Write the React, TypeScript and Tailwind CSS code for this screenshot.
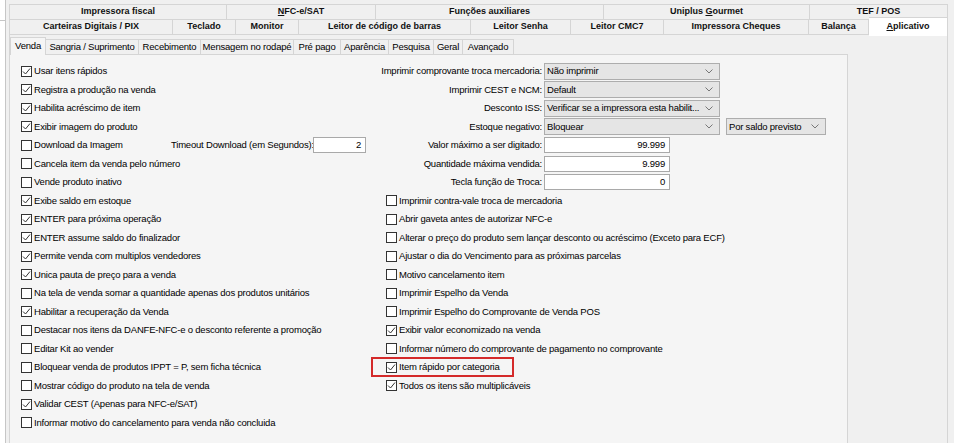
import React from "react";

const FONT = "font-['Liberation_Sans',Arial,sans-serif]";

function Check({ on }: { on?: boolean }) {
  return (
    <span className="flex h-[11px] w-[11px] shrink-0 items-center justify-center border border-[#333] bg-white">
      {on && (
        <svg width="9" height="9" viewBox="0 0 9 9">
          <polyline points="1,4.5 3.5,7 8,1.5" fill="none" stroke="#333" strokeWidth="1" />
        </svg>
      )}
    </span>
  );
}

function Opt({ on, label }: { on?: boolean; label: string }) {
  return (
    <div className="flex h-[18.5px] items-center gap-[2px]">
      <Check on={on} />
      <span className="whitespace-nowrap">{label}</span>
    </div>
  );
}

function Chevron() {
  return (
    <svg width="8" height="5" viewBox="0 0 8 5" className="shrink-0">
      <polyline points="0.5,0.5 4,4 7.5,0.5" fill="none" stroke="#777" strokeWidth="1" />
    </svg>
  );
}

function Combo({ value, w }: { value: string; w: string }) {
  return (
    <div className={`flex h-[17px] items-center justify-between gap-[4px] border border-[#adadad] bg-[#e5e5e5] pl-[2px] pr-[6px] ${w}`}>
      <span className="whitespace-nowrap">{value}</span>
      <Chevron />
    </div>
  );
}

function Input({ value, w }: { value: string; w: string }) {
  return (
    <div className={`flex h-[16px] items-center justify-end border border-[#a9a9a9] bg-white pr-[4px] ${w}`}>
      {value}
    </div>
  );
}

function LabeledRow({ label, children }: { label: string; children: React.ReactNode }) {
  return (
    <div className="flex h-[18.5px] items-center">
      <span className="flex w-[158px] justify-end whitespace-nowrap pr-[2px]">{label}</span>
      {children}
    </div>
  );
}

const row1 = [
  { t: "Impressora fiscal", w: "w-[217px]" },
  { t: "NFC-e/SAT", w: "w-[149px]", u: 0 },
  { t: "Funções auxiliares", w: "w-[228px]" },
  { t: "Uniplus Gourmet", w: "w-[206px]", u: 8 },
  { t: "TEF / POS", w: "flex-1" },
];

const row2 = [
  { t: "Carteiras Digitais / PIX", w: "w-[163px]" },
  { t: "Teclado", w: "w-[63px]" },
  { t: "Monitor", w: "w-[63px]" },
  { t: "Leitor de código de barras", w: "w-[172px]" },
  { t: "Leitor Senha", w: "w-[100px]" },
  { t: "Leitor CMC7", w: "w-[93px]" },
  { t: "Impressora Cheques", w: "w-[145px]" },
  { t: "Balança", w: "w-[60px]" },
];

const subTabs = [
  { t: "Sangria / Suprimento", w: "w-[93px]" },
  { t: "Recebimento", w: "w-[62px]" },
  { t: "Mensagem no rodapé", w: "w-[93px]" },
  { t: "Pré pago", w: "w-[47px]" },
  { t: "Aparência", w: "w-[48px]" },
  { t: "Pesquisa", w: "w-[45px]" },
  { t: "Geral", w: "w-[29px]" },
  { t: "Avançado", w: "w-[51px]" },
];

function Label({ t, u }: { t: string; u?: number }) {
  if (u === undefined) return <span className="whitespace-pre">{t}</span>;
  return (
    <span className="whitespace-pre">
      {t.slice(0, u)}
      <span className="underline">{t[u]}</span>
      {t.slice(u + 1)}
    </span>
  );
}

export default function App() {
  return (
    <div className={`flex h-[443px] w-[954px] overflow-hidden bg-[#f0f0f0] text-[9.5px] tracking-[-0.2px] text-black ${FONT}`}>
      {/* edge of neighbouring panel */}
      <div className="flex w-[6px] flex-col">
        <div className="h-[21px] border-b border-r border-[#c6c6c6] bg-white" />
        <div className="flex-1 border-r border-[#c6c6c6] bg-white" />
      </div>

      <div className="ml-[3px] mt-[4px] flex w-[939px] flex-col">
        {/* outer tab headers */}
        <div className="flex h-[15px] border-l border-t border-[#d5d5d5] text-[9px] font-bold tracking-normal text-[#111]">
          {row1.map((c) => (
            <div key={c.t} className={`flex items-center justify-center border-r border-[#d5d5d5] ${c.w}`}>
              <Label t={c.t} u={c.u} />
            </div>
          ))}
        </div>
        <div className="flex h-[15px] border-l border-t border-[#d5d5d5] text-[9px] font-bold tracking-normal text-[#111]">
          {row2.map((c) => (
            <div key={c.t} className={`flex items-center justify-center border-r border-[#d5d5d5] ${c.w}`}>
              {c.t}
            </div>
          ))}
          <div className="relative -top-[3px] z-10 flex h-[19px] flex-1 items-start justify-center border-r border-t border-[#d5d5d5] bg-white pt-[2px]">
            <Label t="Aplicativo" u={0} />
          </div>
        </div>

        {/* outer page */}
        <div className="flex flex-1 flex-col border-l border-r border-t border-[#d5d5d5] pt-[2px]">
          <div className="flex h-[17px] w-[504px]">
            <div className="z-10 -mb-px flex w-[36px] items-center justify-center border-l border-r border-t border-[#d5d5d5] bg-[#f5f5f5]">
              Venda
            </div>
            {subTabs.map((c) => (
              <div key={c.t} className={`mt-[2px] flex items-center justify-center whitespace-nowrap border-r border-t border-[#d5d5d5] ${c.w}`}>
                {c.t}
              </div>
            ))}
          </div>

          <div className="flex w-[838px] flex-1 border-r border-t border-[#d5d5d5] bg-[#f5f5f5] pl-[11px] pt-[7px]">
            {/* left column */}
            <div className="flex w-[354px] flex-col">
              <Opt on label="Usar itens rápidos" />
              <Opt on label="Registra a produção na venda" />
              <Opt on label="Habilita acréscimo de item" />
              <Opt on label="Exibir imagem do produto" />
              <div className="flex h-[18.5px] items-center">
                <div className="w-[150px]">
                  <Opt label="Download da Imagem" />
                </div>
                <span className="w-[142px] whitespace-nowrap">Timeout Download (em Segundos):</span>
                <Input value="2" w="w-[53px]" />
              </div>
              <Opt label="Cancela item da venda pelo número" />
              <Opt label="Vende produto inativo" />
              <Opt on label="Exibe saldo em estoque" />
              <Opt on label="ENTER para próxima operação" />
              <Opt on label="ENTER assume saldo do finalizador" />
              <Opt on label="Permite venda com multiplos vendedores" />
              <Opt on label="Unica pauta de preço para a venda" />
              <Opt label="Na tela de venda somar a quantidade apenas dos produtos unitários" />
              <Opt on label="Habilitar a recuperação da Venda" />
              <Opt label="Destacar nos itens da DANFE-NFC-e o desconto referente a promoção" />
              <Opt label="Editar Kit ao vender" />
              <Opt label="Bloquear venda de produtos IPPT = P, sem ficha técnica" />
              <Opt label="Mostrar código do produto na tela de venda" />
              <Opt on label="Validar CEST (Apenas para NFC-e/SAT)" />
              <Opt label="Informar motivo do cancelamento para venda não concluida" />
            </div>

            {/* right column */}
            <div className="ml-[11px] flex flex-col">
              <LabeledRow label="Imprimir comprovante troca mercadoria:">
                <Combo value="Não imprimir" w="w-[176px]" />
              </LabeledRow>
              <LabeledRow label="Imprimir CEST e NCM:">
                <Combo value="Default" w="w-[176px]" />
              </LabeledRow>
              <LabeledRow label="Desconto ISS:">
                <Combo value="Verificar se a impressora esta habilit..." w="w-[176px]" />
              </LabeledRow>
              <LabeledRow label="Estoque negativo:">
                <Combo value="Bloquear" w="w-[176px]" />
                <div className="ml-[6px]">
                  <Combo value="Por saldo previsto" w="w-[100px]" />
                </div>
              </LabeledRow>
              <LabeledRow label="Valor máximo a ser digitado:">
                <Input value="99.999" w="w-[126px]" />
              </LabeledRow>
              <LabeledRow label="Quantidade máxima vendida:">
                <Input value="9.999" w="w-[126px]" />
              </LabeledRow>
              <LabeledRow label="Tecla função de Troca:">
                <Input value="0" w="w-[126px]" />
              </LabeledRow>
              <Opt label="Imprimir contra-vale troca de mercadoria" />
              <Opt label="Abrir gaveta antes de autorizar NFC-e" />
              <Opt label="Alterar o preço do produto sem lançar desconto ou acréscimo (Exceto para ECF)" />
              <Opt label="Ajustar o dia do Vencimento para as próximas parcelas" />
              <Opt label="Motivo cancelamento item" />
              <Opt label="Imprimir Espelho da Venda" />
              <Opt label="Imprimir Espelho do Comprovante de Venda POS" />
              <Opt on label="Exibir valor economizado na venda" />
              <Opt label="Informar número do comprovante de pagamento no comprovante" />
              <div className="relative">
                <Opt on label="Item rápido por categoria" />
                <span className="pointer-events-none absolute -left-[15px] -top-[1px] h-[20px] w-[143px] border-2 border-[#d42a2a]" />
              </div>
              <Opt on label="Todos os itens são multiplicáveis" />
            </div>
          </div>
        </div>
      </div>
    </div>
  );
}
